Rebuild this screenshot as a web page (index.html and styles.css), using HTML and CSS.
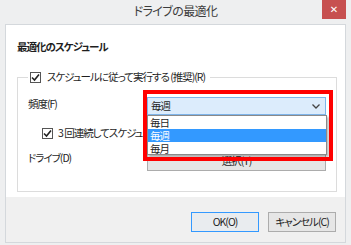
FILE: index.html
```html
<!DOCTYPE html>
<html lang="ja">
<head>
<meta charset="utf-8">
<link rel="stylesheet" href="styles.css">
</head>
<body>
<div class="window">
  <div class="titlebar">
    <span class="title">ドライブの最適化</span>
    <span class="close">✕</span>
  </div>
  <div class="client">
    <div class="content">
      <div class="heading">最適化のスケジュール</div>
      <fieldset class="group">
        <legend class="legend">
          <span class="check"><svg width="9" height="9" viewBox="0 0 9 9"><path d="M1 4.5 L3.5 7 L8 1.5" fill="none" stroke="#222" stroke-width="1.6"/></svg></span>
          <span>スケジュールに従って実行する (推奨)(R)</span>
        </legend>
        <div class="row freq">
          <span class="label">頻度(F)</span>
          <div class="combo">
            <span class="combo-text">毎週</span>
            <svg class="chev" width="8" height="5" viewBox="0 0 8 5"><path d="M0.5 0.5 L4 4 L7.5 0.5" fill="none" stroke="#444" stroke-width="1.3"/></svg>
            <div class="list">
              <div class="item">毎日</div>
              <div class="item sel">毎週</div>
              <div class="item">毎月</div>
            </div>
            <div class="highlight"></div>
          </div>
        </div>
        <div class="row sub">
          <span class="check"><svg width="9" height="9" viewBox="0 0 9 9"><path d="M1 4.5 L3.5 7 L8 1.5" fill="none" stroke="#222" stroke-width="1.6"/></svg></span>
          <span class="sublabel">3 回連続してスケジュールされた実行が行われなかった場合に通知する(N)</span>
        </div>
        <div class="row drive">
          <span class="label">ドライブ(D)</span>
          <div class="pick">選択(T)</div>
        </div>
      </fieldset>
    </div>
    <div class="footer">
      <div class="btn default">OK(O)</div>
      <div class="btn">キャンセル(C)</div>
    </div>
  </div>
</div>
</body>
</html>
```

FILE: styles.css
```css
* { box-sizing: border-box; }
html, body { margin: 0; padding: 0; }
body {
  width: 351px;
  height: 245px;
  overflow: hidden;
  background: #eeeff0;
  font-family: "Noto Sans CJK JP", "Noto Sans", sans-serif;
  font-feature-settings: "palt" 1;
  font-size: 10.5px;
  letter-spacing: -1px;
  color: #1e1e1e;
}
.window {
  width: 351px;
  height: 245px;
  display: flex;
  flex-direction: column;
  padding: 0 5px 2px 5px;
}
.titlebar {
  height: 24px;
  flex: none;
  position: relative;
  display: flex;
  justify-content: center;
  align-items: center;
}
.title {
  font-size: 12px;
  letter-spacing: -0.6px;
  color: #3c3c3c;
  margin-top: -3px;
}
.close {
  position: absolute;
  top: 0;
  right: 0;
  width: 24px;
  height: 19px;
  background: #c75050;
  color: #fff;
  font-size: 10px;
  font-weight: bold;
  display: flex;
  align-items: center;
  justify-content: center;
  font-family: "DejaVu Sans", sans-serif;
  letter-spacing: 0;
}
.client {
  flex: 1;
  display: flex;
  flex-direction: column;
  border: 1px solid #d4d8dc;
  background: #f0f0f0;
}
.content {
  height: 172px;
  background: #fff;
  padding: 14px 8px 0 11px;
}
.heading {
  font-weight: bold;
  line-height: 16px;
  color: #1e1e1e;
}
.group {
  margin: 14px 0 0 0;
  padding: 0 0 0 10px;
  height: 123px;
  border: 1px solid #dcdcdc;
  min-width: 0;
}
.legend {
  display: flex;
  align-items: center;
  gap: 6px;
  padding: 0 5px 0 2px;
  line-height: 16px;
}
.check {
  width: 11px;
  height: 11px;
  border: 1px solid #555;
  background: #fff;
  display: inline-flex;
  align-items: center;
  justify-content: center;
  flex: none;
}
.row {
  display: flex;
  align-items: center;
}
.label { width: 119px; flex: none; line-height: 16px; }
.freq {
  margin-top: 12px;
  align-items: flex-start;
}
.freq .label { margin-top: -1px; }
.combo {
  position: relative;
  width: 179px;
  height: 18px;
  border: 1px solid #7eb4ea;
  background: #dcecfc;
  display: flex;
  align-items: center;
  padding-left: 3px;
}
.combo-text { flex: 1; line-height: 14px; }
.chev { margin-right: 5px; }
.list {
  position: absolute;
  left: -1px;
  top: 17px;
  width: 180px;
  height: 40px;
  background: #fff;
  border: 1px solid #8a8a8a;
  box-shadow: 2px 2px 2px rgba(0,0,0,0.25);
  z-index: 2;
}
.item {
  height: 13px;
  line-height: 13px;
  padding-left: 2px;
}
.item.sel {
  background: #3399ff;
  color: #fff;
}
.highlight {
  position: absolute;
  left: -5px;
  top: -8px;
  width: 190px;
  height: 71px;
  border: 4px solid #ff0000;
  z-index: 3;
}
.sub {
  margin-top: 10px;
  padding-left: 14px;
  gap: 5px;
  width: 119px;
  white-space: nowrap;
  overflow: hidden;
  line-height: 16px;
}
.drive {
  margin-top: 8px;
  align-items: flex-start;
}
.drive .label { margin-top: 1px; }
.pick {
  width: 179px;
  height: 22px;
  border: 1px solid #acacac;
  background: #e5e5e5;
  display: flex;
  align-items: center;
  justify-content: center;
}
.footer {
  flex: 1;
  display: flex;
  justify-content: flex-end;
  align-items: flex-start;
  gap: 9px;
  padding: 15px 9px 0 0;
}
.btn {
  width: 68px;
  height: 20px;
  border: 1px solid #acacac;
  background: #e6e6e6;
  display: flex;
  align-items: center;
  justify-content: center;
  line-height: 14px;
  white-space: nowrap;
}
.btn.default {
  border-color: #3399ff;
  background: #e9ecef;
}
```
